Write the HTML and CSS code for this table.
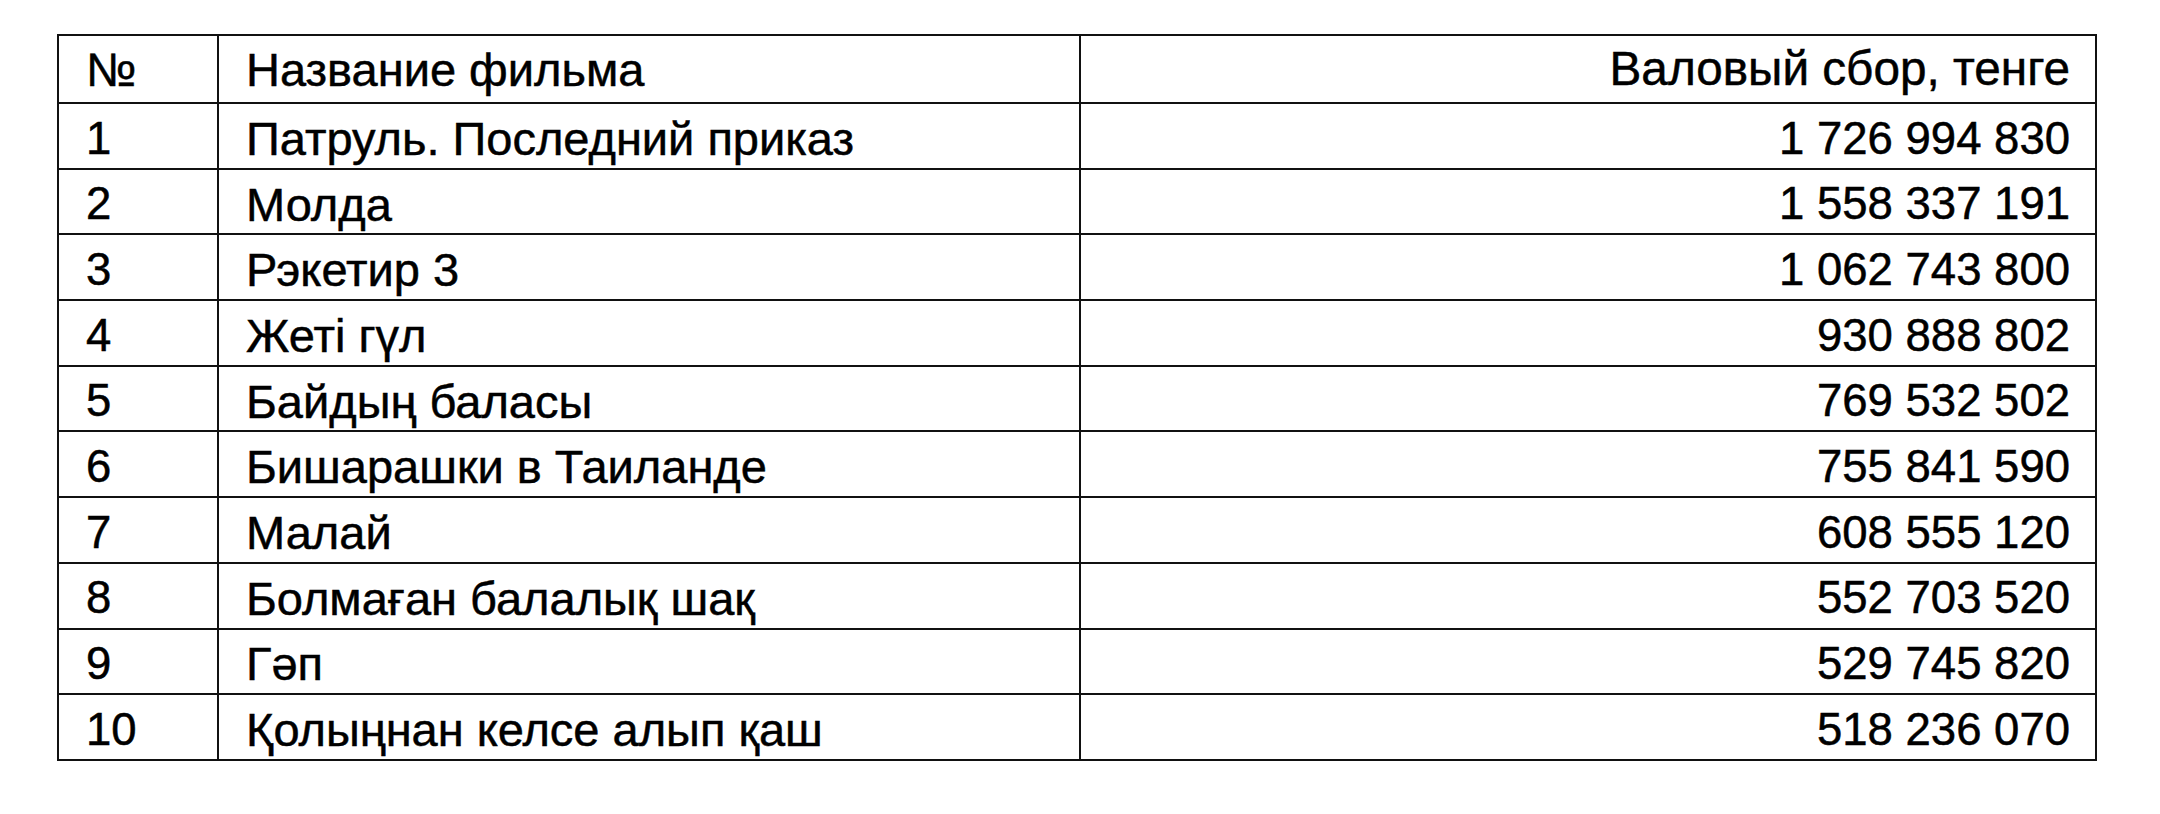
FILE: index.html
```html
<!DOCTYPE html>
<html lang="ru">
<head>
<meta charset="utf-8">
<title>Кассовые сборы</title>
<link rel="stylesheet" href="styles.css">
</head>
<body>
<table class="box">
  <colgroup>
    <col class="c-num">
    <col class="c-name">
    <col class="c-sum">
  </colgroup>
  <thead>
    <tr class="head"><th class="num">№</th><th class="name">Название фильма</th><th class="sum">Валовый сбор, тенге</th></tr>
  </thead>
  <tbody>
    <tr><td class="num">1</td><td class="name">Патруль. Последний приказ</td><td class="sum">1 726 994 830</td></tr>
    <tr><td class="num">2</td><td class="name">Молда</td><td class="sum">1 558 337 191</td></tr>
    <tr><td class="num">3</td><td class="name">Рэкетир 3</td><td class="sum">1 062 743 800</td></tr>
    <tr><td class="num">4</td><td class="name">Жеті гүл</td><td class="sum">930 888 802</td></tr>
    <tr><td class="num">5</td><td class="name">Байдың баласы</td><td class="sum">769 532 502</td></tr>
    <tr><td class="num">6</td><td class="name">Бишарашки в Таиланде</td><td class="sum">755 841 590</td></tr>
    <tr><td class="num">7</td><td class="name">Малай</td><td class="sum">608 555 120</td></tr>
    <tr><td class="num">8</td><td class="name">Болмаған балалық шақ</td><td class="sum">552 703 520</td></tr>
    <tr><td class="num">9</td><td class="name">Гәп</td><td class="sum">529 745 820</td></tr>
    <tr><td class="num">10</td><td class="name">Қолыңнан келсе алып қаш</td><td class="sum">518 236 070</td></tr>
  </tbody>
</table>
</body>
</html>
```
FILE: styles.css
```css
html, body {
  margin: 0;
  padding: 0;
  background: #ffffff;
}
body {
  font-family: "Liberation Sans", Arial, sans-serif;
  font-size: 47px;
  color: #000000;
}
.box {
  border-collapse: collapse;
  table-layout: fixed;
  width: 2038px;
  margin: 34px 0 0 57px;
}
.c-num { width: 160px; }
.c-name { width: 862px; }
.c-sum { width: 1016px; }
th, td {
  box-sizing: border-box;
  border: 2px solid #111111;
  font-weight: normal;
  padding: 0 25px 0 27px;
  height: 65.7px;
  line-height: 1;
  vertical-align: middle;
  white-space: nowrap;
  -webkit-text-stroke: 0.5px #000000;
}
.head th {
  height: 68px;
}
td {
  padding-top: 5px;
}
.num, .name { text-align: left; }
.sum { text-align: right; }
.head .sum { font-size: 47.7px; }
td.sum, td.num { font-size: 45.5px; }
```
